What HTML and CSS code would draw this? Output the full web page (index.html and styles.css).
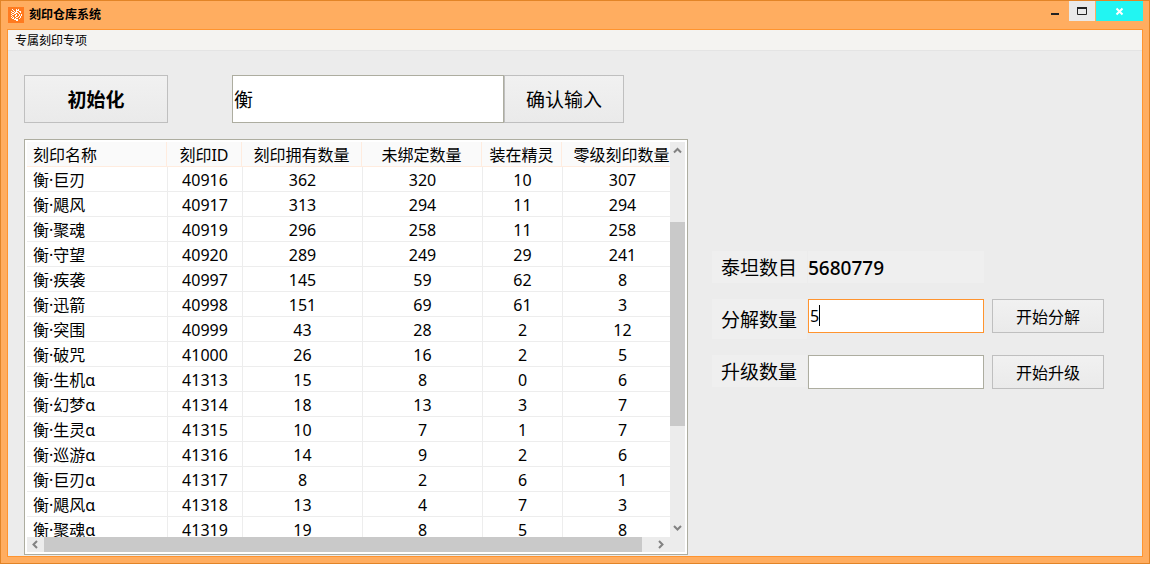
FILE: index.html
```html
<!DOCTYPE html>
<html lang="zh-CN">
<head>
<meta charset="utf-8">
<title>刻印仓库系统</title>
<link rel="stylesheet" href="styles.css">
</head>
<body>
<div class="window">
  <header class="titlebar">
    <svg class="logo" viewBox="0 0 16 16" aria-hidden="true">
      <rect width="16" height="16" fill="#ff7a1f"/>
      <path d="M4 2.500h1M8 2.500h1M10 2.500h1M5 3.500h1M8 3.500h3M3 4.500h1M6 4.500h1M8 4.500h1M11 4.500h2M4 5.500h2M7 5.500h3M12 5.500h1M3 6.500h1M6 6.500h2M10 6.500h1M4 7.500h2M8 7.500h1M11 7.500h1M13 7.500h1M3 8.500h1M7 8.500h2M11 8.500h1M13 8.500h1M4 9.500h1M7 9.500h1M10 9.500h1M12 9.500h1M3 10.500h1M5 10.500h1M8 10.500h2M12 10.500h1M4 11.500h2M7 11.500h1M11 11.500h1M6 12.500h4M8 13.500h2" fill="none" stroke="#fff"/>
    </svg>
    <h1 class="title">刻印仓库系统</h1>
    <div class="caption">
      <button class="cap cap-min" aria-label="最小化"><svg width="26" height="20"><path d="M9 13h8" stroke="#222" stroke-width="2"/></svg></button>
      <button class="cap cap-max" aria-label="最大化"><svg width="26" height="20"><path d="M8 7h10M8.500 7v6.500h9V7" fill="none" stroke="#222"/><path d="M8 7h10" stroke="#222" stroke-width="2"/></svg></button>
      <button class="cap cap-close" aria-label="关闭"><svg width="47" height="20"><path d="M20.500 7.500l6 6M26.500 7.500l-6 6" stroke="#fff" stroke-width="2"/></svg></button>
    </div>
  </header>
  <div class="client">
    <nav class="menubar"><button class="menu-item">专属刻印专项</button></nav>
    <main class="content">
      <section class="left">
        <form class="search">
          <button type="button" class="btn btn-init">初始化</button>
          <input class="field search-field" type="text" value="衡" aria-label="刻印名称">
          <button type="button" class="btn btn-confirm">确认输入</button>
        </form>
        <div class="list">
          <div class="list-view">
            <table class="grid">
              <colgroup><col class="c-name"><col class="c-id"><col class="c-wide"><col class="c-wide"><col class="c-mid"><col class="c-wide"></colgroup>
              <thead><tr><th>刻印名称</th><th>刻印ID</th><th>刻印拥有数量</th><th>未绑定数量</th><th>装在精灵</th><th>零级刻印数量</th></tr></thead>
              <tbody>
                <tr><td>衡·巨刃</td><td>40916</td><td>362</td><td>320</td><td>10</td><td>307</td></tr>
                <tr><td>衡·飓风</td><td>40917</td><td>313</td><td>294</td><td>11</td><td>294</td></tr>
                <tr><td>衡·聚魂</td><td>40919</td><td>296</td><td>258</td><td>11</td><td>258</td></tr>
                <tr><td>衡·守望</td><td>40920</td><td>289</td><td>249</td><td>29</td><td>241</td></tr>
                <tr><td>衡·疾袭</td><td>40997</td><td>145</td><td>59</td><td>62</td><td>8</td></tr>
                <tr><td>衡·迅箭</td><td>40998</td><td>151</td><td>69</td><td>61</td><td>3</td></tr>
                <tr><td>衡·突围</td><td>40999</td><td>43</td><td>28</td><td>2</td><td>12</td></tr>
                <tr><td>衡·破咒</td><td>41000</td><td>26</td><td>16</td><td>2</td><td>5</td></tr>
                <tr><td>衡·生机α</td><td>41313</td><td>15</td><td>8</td><td>0</td><td>6</td></tr>
                <tr><td>衡·幻梦α</td><td>41314</td><td>18</td><td>13</td><td>3</td><td>7</td></tr>
                <tr><td>衡·生灵α</td><td>41315</td><td>10</td><td>7</td><td>1</td><td>7</td></tr>
                <tr><td>衡·巡游α</td><td>41316</td><td>14</td><td>9</td><td>2</td><td>6</td></tr>
                <tr><td>衡·巨刃α</td><td>41317</td><td>8</td><td>2</td><td>6</td><td>1</td></tr>
                <tr><td>衡·飓风α</td><td>41318</td><td>13</td><td>4</td><td>7</td><td>3</td></tr>
                <tr><td>衡·聚魂α</td><td>41319</td><td>19</td><td>8</td><td>5</td><td>8</td></tr>
              </tbody>
            </table>
          </div>
          <div class="vbar">
            <svg width="15" height="17"><path d="M4 10.500l3.500-3.500 3.500 3.500" fill="none" stroke="#828282" stroke-width="2"/></svg>
            <div class="vtrack"><span class="vthumb"></span></div>
            <svg width="15" height="17"><path d="M4 6l3.500 3.500L11 6" fill="none" stroke="#828282" stroke-width="2"/></svg>
          </div>
          <div class="hbar">
            <svg width="17" height="15"><path d="M10 4L6.500 7.500 10 11" fill="none" stroke="#828282" stroke-width="2"/></svg>
            <div class="htrack"><span class="hthumb"></span></div>
            <svg width="17" height="15"><path d="M6 4l3.500 3.500L6 11" fill="none" stroke="#828282" stroke-width="2"/></svg>
          </div>
          <div class="corner"></div>
        </div>
      </section>
      <section class="panel">
        <span class="label">泰坦数目</span>
        <output class="value">5680779</output>
        <label class="label label-tall" for="split">分解数量</label>
        <div class="field-wrap"><input class="field amount active" id="split" type="text" value="5"><span class="caret"></span></div>
        <button type="button" class="btn btn-start">开始分解</button>
        <label class="label" for="upgrade">升级数量</label>
        <div class="field-wrap"><input class="field amount" id="upgrade" type="text"></div>
        <button type="button" class="btn btn-start">开始升级</button>
      </section>
    </main>
  </div>
</div>
</body>
</html>
```
FILE: styles.css
```css
* { box-sizing: border-box; }
body {
  margin: 0;
  color: #000;
  font: 16px/24px "Noto Sans", "Noto Sans CJK SC", sans-serif;
}
button, input { font: inherit; color: inherit; margin: 0; border-radius: 0; }
svg { display: block; }

.window {
  display: flex;
  flex-direction: column;
  height: 100vh;
  padding: 0 6px 6px;
  border: 1px solid #e28427;
  background: #ffad60;
}
.titlebar { display: flex; align-items: center; flex: none; height: 28px; padding-left: 1px; }
.logo { width: 16px; height: 16px; }
.title { margin: 0 0 0 5px; font-size: 12px; line-height: 16px; font-weight: 700; }
.caption { display: flex; align-self: flex-start; margin-left: auto; gap: 1px; }
.cap { padding: 0; border: 0; height: 20px; background: none; }
.cap-max { background: #e9e9e9; }
.cap-close { background: #22f5f2; }

.client {
  display: flex;
  flex: 1;
  flex-direction: column;
  min-height: 0;
  border: 1px solid #ff942f;
  background: #ececec;
}
.menubar { flex: none; height: 21px; border-bottom: 1px solid #e4e4e4; background: #f4f3f1; }
.menu-item { display: block; padding: 1px 7px 0; border: 0; background: none; font-size: 12px; line-height: 19px; }

.content { display: flex; flex: 1; min-height: 0; gap: 24px; padding: 0 16px 1px; }
.left { display: flex; flex: none; flex-direction: column; gap: 16px; padding-top: 24px; }
.search { display: flex; height: 48px; margin: 0; font-size: 19px; }
.btn {
  padding: 2px 0 0;
  border: 1px solid #bfbfbf;
  background: linear-gradient(#f1f1f1, #eaeaea);
}
.btn-init { width: 144px; margin-right: 64px; font-weight: 700; }
.btn-confirm { width: 120px; }
.field { border: 1px solid #adada0; background: #fff; padding: 0 1px; outline: 0; }
.search-field { width: 272px; padding-top: 2px; }

.list {
  display: grid;
  flex: 1;
  grid-template-columns: 643px 15px;
  grid-template-rows: minmax(0, 1fr) 15px;
  min-height: 0;
  padding: 2px;
  border: 1px solid #adada0;
  background: #fff;
}
.list-view { overflow: hidden; }
.grid { width: 655px; table-layout: fixed; border-collapse: separate; border-spacing: 0; }
.c-name { width: 140px; }
.c-id { width: 75px; }
.c-wide { width: 120px; }
.c-mid { width: 80px; }
.grid th, .grid td {
  height: 25px;
  padding: 2px 0 0;
  border-bottom: 1px solid #ededed;
  font-weight: 400;
  line-height: 22px;
  text-align: center;
  white-space: nowrap;
}
.grid td { border-left: 1px solid #ededed; }
.grid th { border-right: 1px solid #ffecdf; border-bottom-color: #ffecdf; background: #fafafa; }
.grid th:first-child, .grid td:first-child { padding-left: 6px; border-left: 0; text-align: left; }

.vbar, .hbar { display: flex; background: #ececec; }
.vbar { flex-direction: column; }
.vtrack, .htrack { flex: 1; }
.vthumb, .hthumb { display: block; background: #c9c9c9; }
.vtrack { padding-top: 63px; }
.vthumb { height: 204px; }
.hthumb { width: 598px; height: 15px; }
.corner { background: #ececec; }

.panel {
  display: grid;
  grid-template-columns: 96px 176px 112px;
  align-content: start;
  align-items: start;
  row-gap: 16px;
  padding-top: 200px;
}
.label, .value { display: block; height: 32px; background: #efefef; font-size: 19px; line-height: 34px; }
.label { margin-right: 1px; padding-left: 9px; }
.label-tall { height: 40px; line-height: 42px; }
.value { grid-column: 2 / 3; font-weight: 500; }
.label-tall { grid-column: 1; }
.field-wrap { position: relative; }
.amount { display: block; width: 100%; height: 34px; }
.active { border-color: #ff942f; }
.caret { position: absolute; left: 11px; top: 6px; width: 1px; height: 21px; background: #000; }
.btn-start { width: 112px; height: 34px; margin-left: 8px; }
```
